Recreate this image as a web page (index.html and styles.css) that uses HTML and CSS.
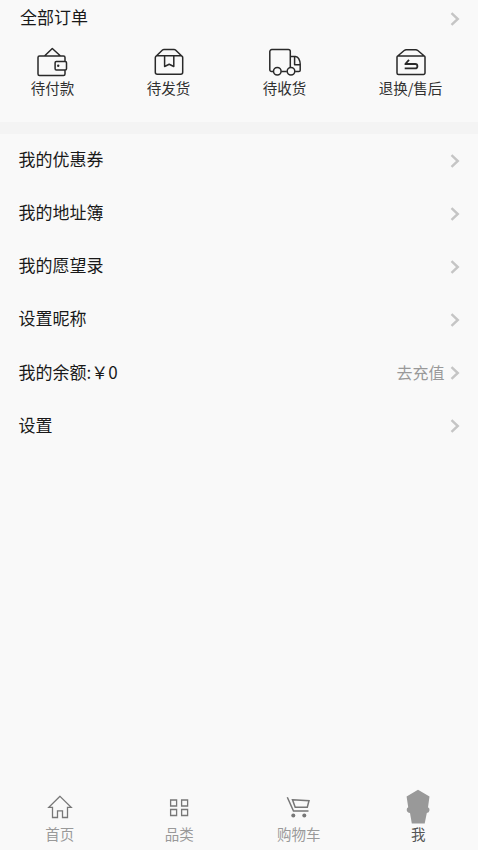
FILE: index.html
```html
<!DOCTYPE html>
<html lang="zh-CN">
<head>
<meta charset="utf-8">
<title>我</title>
<link rel="stylesheet" href="styles.css">
</head>
<body>
<svg width="0" height="0" class="defs"><symbol id="chevron" viewBox="0 0 10 14"><path d="M1.500 1.200 7.800 7 1.500 12.800" fill="none" stroke="currentColor" stroke-width="2.400"/></symbol></svg>
<main class="page">
  <section class="orders">
    <div class="orders-head"><span>全部订单</span><svg class="chevron"><use href="#chevron"/></svg></div>
    <div class="order-types">
      <div class="order pay">
        <svg class="order-icon" viewBox="0 0 34 32"><path d="M29 14.500V10.500a1.500 1.500 0 0 0-1.500-1.500h-24A1.500 1.500 0 0 0 2 10.500V27a1.500 1.500 0 0 0 1.500 1.500h24A1.500 1.500 0 0 0 29 27v-4M8.500 9 16.300 1.500 24.500 9M20.300 14.500h9a1.200 1.200 0 0 1 1.200 1.200v6a1.200 1.200 0 0 1-1.200 1.200h-9a1.200 1.200 0 0 1-1.200-1.200v-6a1.200 1.200 0 0 1 1.200-1.200Z"/><circle class="dot" cx="22.200" cy="18.800" r="1.200"/></svg>
        <span>待付款</span>
      </div>
      <div class="order ship">
        <svg class="order-icon" viewBox="0 0 34 32"><path d="M5.300 8.700h23.400a2 2 0 0 1 2 2v14.500a2 2 0 0 1-2 2H5.300a2 2 0 0 1-2-2V10.700a2 2 0 0 1 2-2ZM4 9.300 10.500 3q.6-.6 1.500-.6h10q.9 0 1.500.6L30 9.300M12.600 8.700v10.800l4.600-2.200 4.600 2.200V8.700"/></svg>
        <span>待发货</span>
      </div>
      <div class="order receive">
        <svg class="order-icon" viewBox="0 0 34 32"><path d="M5.300 24.500H3.600A1.800 1.800 0 0 1 1.800 22.700V4.600A2 2 0 0 1 3.800 2.600h16.500a2 2 0 0 1 2 2v16.200M13.200 24.500h5.600M22.300 9.400h5.200q2 0 3.200 2.300 1.500 2.800 1.500 5.200v6.300q0 1.300-1.300 1.300h-3.800M32.200 17.800h-5.600v-8"/><circle cx="9.300" cy="24.300" r="3.800"/><circle cx="23" cy="24.300" r="3.800"/></svg>
        <span>待收货</span>
      </div>
      <div class="order refund">
        <svg class="order-icon" viewBox="0 0 34 32"><path d="M4 9h26a1 1 0 0 1 1 1v16a1.500 1.500 0 0 1-1.500 1.500h-25A1.500 1.500 0 0 1 3 26V10a1 1 0 0 1 1-1ZM3.400 9.300 10.500 3.300q.8-.6 1.500-.6h10q.7 0 1.500.6L30.600 9.300"/><path class="bold" d="M15 12.800 11.300 17h9.900a2.200 2.200 0 0 1 0 4.400H10.700"/></svg>
        <span>退换/售后</span>
      </div>
    </div>
  </section>
  <section class="menu">
    <div class="row"><span>我的优惠券</span><svg class="chevron"><use href="#chevron"/></svg></div>
    <div class="row"><span>我的地址簿</span><svg class="chevron"><use href="#chevron"/></svg></div>
    <div class="row"><span>我的愿望录</span><svg class="chevron"><use href="#chevron"/></svg></div>
    <div class="row"><span>设置昵称</span><svg class="chevron"><use href="#chevron"/></svg></div>
    <div class="row"><span>我的余额:￥0</span><span class="action">去充值</span><svg class="chevron"><use href="#chevron"/></svg></div>
    <div class="row"><span>设置</span><svg class="chevron"><use href="#chevron"/></svg></div>
  </section>
  <nav class="tabs">
    <div class="tab">
      <svg class="tab-icon" viewBox="0 0 28 36"><path d="M14 7.300 2.800 18.300h3.700v10.200h5v-6.700h5v6.700h5V18.300h3.700Z"/></svg>
      <span>首页</span>
    </div>
    <div class="tab">
      <svg class="tab-icon" viewBox="0 0 28 36"><path d="M5.600 11h6v6h-6ZM16.600 11h6v6h-6ZM5.600 20.500h6v6h-6ZM16.600 20.500h6v6h-6Z"/></svg>
      <span>品类</span>
    </div>
    <div class="tab">
      <svg class="tab-icon cart" viewBox="0 0 28 36"><path d="M2.300 8.300 8.500 22.100H23.500M7.500 10.700 24 11.800 22.300 18.200H10.200Z"/><circle class="wheel" cx="8.300" cy="26.600" r="2"/><circle class="wheel" cx="19.300" cy="26.600" r="2"/></svg>
      <span>购物车</span>
    </div>
    <div class="tab active">
      <svg class="tab-icon" viewBox="0 0 28 36"><path d="M14 .8 25.500 7.500 24 18.200Q25.800 19.200 25.500 21.300 25.200 23.700 22.800 24L20.700 34.500H7.800L6 24Q3 23.700 2.700 21 2.600 19 4.200 18.200L2.600 7.500Z"/></svg>
      <span>我</span>
    </div>
  </nav>
</main>
</body>
</html>
```
FILE: styles.css
```css
* { box-sizing: border-box; }
body {
  margin: 0;
  background: #f9f9f9;
  color: #191919;
  font-family: "Noto Sans CJK SC", sans-serif;
  font-size: 17px;
  line-height: 24px;
}
.defs { display: none; }
.page { height: 850px; display: flex; flex-direction: column; overflow: hidden; }
.orders { height: 134px; border-bottom: 12px solid #f4f4f4; }
.orders-head {
  height: 37px;
  padding: 0 18px 0 20px;
  display: flex;
  align-items: center;
  justify-content: space-between;
}
.orders-head span, .row span { padding-bottom: 3px; }
.chevron { display: block; width: 10px; height: 14px; color: #c5c5c5; flex: none; }
.order-types { display: flex; padding-top: 10px; }
.order {
  flex: none;
  display: flex;
  flex-direction: column;
  align-items: center;
  font-size: 14.5px;
  line-height: 20px;
  color: #303030;
  white-space: nowrap;
}
.pay { width: 105px; }
.ship { width: 127px; }
.receive { width: 105px; }
.refund { width: 147px; }
.order-icon {
  width: 34px;
  height: 32px;
  margin-bottom: -1px;
  fill: none;
  stroke: #292929;
  stroke-width: 1.5;
  stroke-linejoin: round;
}
.order-icon .dot { fill: #292929; stroke: none; }
.order-icon .bold { stroke-width: 1.8; }
.menu { flex: 1; }
.row {
  height: 53.15px;
  padding: 0 18px 0 18.5px;
  display: flex;
  align-items: center;
}
.row .chevron { margin-left: auto; }
.row .action { margin-left: auto; font-size: 16px; color: #999; }
.row .action + .chevron { margin-left: 5.5px; }
.tabs { height: 61px; display: flex; }
.tab {
  flex: 1;
  display: flex;
  flex-direction: column;
  align-items: center;
  font-size: 14.5px;
  line-height: 18px;
  color: #999;
}
.tab-icon { width: 28px; height: 36px; fill: none; stroke: #777; stroke-width: 1.3; }
.cart { stroke-width: 1.5; }
.cart .wheel { fill: #777; stroke: none; }
.active { color: #555; }
.active .tab-icon { fill: #999; stroke: none; }
```
